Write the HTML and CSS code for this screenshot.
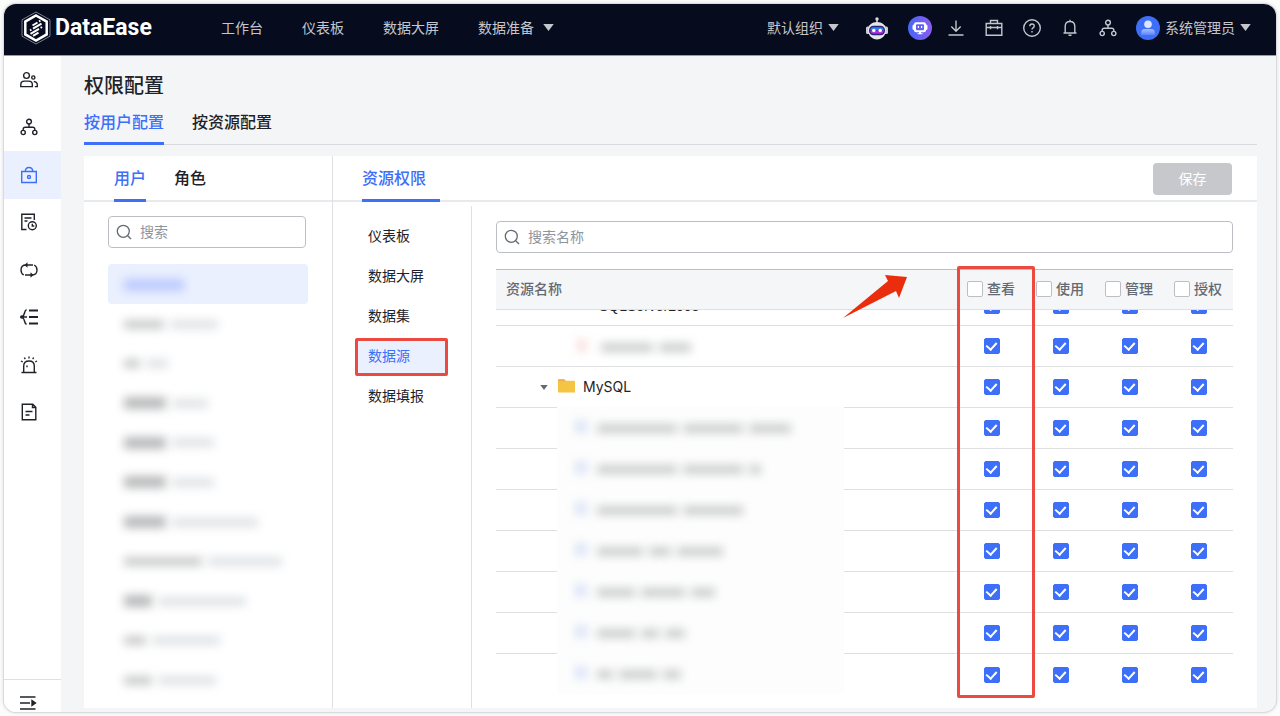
FILE: index.html
```html
<!DOCTYPE html>
<html lang="zh-CN">
<head>
<meta charset="utf-8">
<meta name="viewport" content="width=device-width, initial-scale=1">
<title>DataEase</title>
<link rel="stylesheet" href="styles.css">
</head>
<body>
<svg class="defs" aria-hidden="true">
  <symbol id="org" viewBox="0 0 18 18"><g fill="none" stroke="currentColor" stroke-width="1.4"><circle cx="9" cy="3.6" r="2.4"/><circle cx="3.2" cy="14.5" r="2.1"/><circle cx="14.8" cy="14.5" r="2.1"/><path d="M9 6v3.2M3.2 12.3v-1q0-2 2-2h7.600q2 0 2 2v1"/></g></symbol>
  <symbol id="search" viewBox="0 0 16 16"><g fill="none" stroke="currentColor" stroke-width="1.3"><circle cx="7.300" cy="7.300" r="6"/><path d="M11.700 11.700l3.300 3.300"/></g></symbol>
  <symbol id="caret" viewBox="0 0 12 8"><path d="M0 0h12L6 8z" fill="currentColor"/></symbol>
</svg>
<div class="window">
  <header class="topbar">
    <a class="brand" href="#">
      <svg class="brand-mark" viewBox="0 0 30 34" fill="none">
        <path d="M15 1L29 8.800V25.200L15 33L1 25.200V8.800z" stroke="#9a9eaa" stroke-width=".8"/>
        <path d="M15 4.500L25.700 10.600V23.400L15 29.500L4.300 23.400V10.600z" stroke="#fff" stroke-width="2.500"/>
        <path d="M11.500 14.500l5-3M18 10.500l1.400-.8M9 19.500l1.400-.8M12 17.600l8.500-5M9.500 22.800l8.500-5M19.600 16.800l1.400-.8M12 24.800l5.500-3.200" stroke="#fff" stroke-width="2"/>
      </svg>
      <span>DataEase</span>
    </a>
    <nav class="topnav">
      <a href="#">工作台</a><a href="#">仪表板</a><a href="#">数据大屏</a>
      <a href="#" class="has-caret wide">数据准备<svg class="caret"><use href="#caret"/></svg></a>
    </nav>
    <div class="tools">
      <button class="has-caret org-switch">默认组织<svg class="caret"><use href="#caret"/></svg></button>
      <button class="robot" aria-label="智能助手">
        <svg width="24" height="24" viewBox="0 0 24 24"><circle cx="12" cy="3" r="1.700" fill="#d9dbe2"/><path d="M11.300 4h1.400v3h-1.400z" fill="#d9dbe2"/><rect x="1" y="10.500" width="22" height="7.500" rx="1.500" fill="#c9ccd5"/><path d="M3 14C3 9 7 6 12 6s9 3 9 8-4 9.500-9 9.500S3 19 3 14z" fill="#e4e6ea"/><rect x="4" y="9.800" width="16" height="9.400" rx="4.500" fill="#2b2376"/><path d="M7 11.200h10q1.800 1 1.800 3H5.200q0-2 1.800-3z" fill="#2b82ee"/><path d="M5.200 14.500h13.600q-.3 3.300-3.300 3.300h-7q-3 0-3.300-3.300z" fill="#b12fd8"/><circle cx="8.800" cy="14.500" r="1.700" fill="#fff"/><circle cx="15.200" cy="14.500" r="1.700" fill="#fff"/></svg>
      </button>
      <button class="copilot" aria-label="Copilot">
        <svg width="24" height="24" viewBox="0 0 24 24"><defs><linearGradient id="cg"><stop stop-color="#4566f6"/><stop offset="1" stop-color="#8b5cf0"/></linearGradient></defs><circle cx="12" cy="12" r="12" fill="url(#cg)"/><rect x="4.500" y="8.500" width="15" height="5.500" rx="1.500" fill="#fff"/><rect x="6" y="6.200" width="12" height="10" rx="2" fill="#fff"/><path d="M11 16h2v1.200h1.500v1h-5v-1H11z" fill="#fff"/><rect x="8" y="8.200" width="8" height="6" rx="1" fill="#6461ee"/><path d="M10.400 10v2M13.600 10v2" stroke="#fff" stroke-width="1.200"/></svg>
      </button>
      <div class="line-tools">
        <button aria-label="下载"><svg viewBox="0 0 18 18"><path d="M9 1.500v10.500M4.300 7.500L9 12.200l4.700-4.700M1.500 16h15"/></svg></button>
        <button aria-label="工具箱"><svg viewBox="0 0 18 18"><path d="M1.200 4.500h15.600v11.800H1.200zM5.500 4.500v-3h7v3M1.200 8.500h15.600M5.500 7v3.200M12.500 7v3.200"/></svg></button>
        <button aria-label="帮助"><svg viewBox="0 0 18 18"><circle cx="9" cy="9" r="8.300"/><path d="M6.800 7.200q0-2.200 2.200-2.200t2.200 2q0 1.200-1.200 1.900-1 .6-1 1.700M9 12v1.500"/></svg></button>
        <button aria-label="消息"><svg viewBox="0 0 18 18"><path d="M9 .8v1.500M2.500 14h13M4.200 14V7.500q0-5 4.800-5t4.800 5V14M7.500 16.300h3"/></svg></button>
        <button aria-label="系统"><svg viewBox="0 0 18 18"><use href="#org"/></svg></button>
      </div>
      <button class="has-caret account">
        <svg width="24" height="24" viewBox="0 0 24 24"><defs><linearGradient id="ag" x2="0" y2="1"><stop stop-color="#a9c0ff"/><stop offset="1" stop-color="#5c85fb"/></linearGradient></defs><circle cx="12" cy="12" r="12" fill="#3d6ff8"/><circle cx="12" cy="8.200" r="3.800" fill="#dce5ff"/><path d="M5.200 19v-2.500q0-3.500 3.500-3.500h6.600q3.500 0 3.500 3.500V19z" fill="url(#ag)"/></svg>
        <span>系统管理员</span><svg class="caret"><use href="#caret"/></svg>
      </button>
    </div>
  </header>
  <div class="body">
    <aside class="sidebar">
      <nav class="side-nav">
        <a href="#" aria-label="用户"><svg viewBox="0 0 18 18"><circle cx="6.500" cy="4.500" r="2.900"/><path d="M.8 15.600v-2q0-3.500 3.500-3.500h4.500q3.500 0 3.500 3.500v2z"/><circle cx="13.300" cy="6.500" r="1.600"/><path d="M13.800 10.500q3.500.3 3.500 3.500v1.600h-2.500"/></svg></a>
        <a href="#" aria-label="组织"><svg viewBox="0 0 18 18"><use href="#org"/></svg></a>
        <a href="#" aria-label="权限配置" class="active"><svg viewBox="0 0 18 18"><path d="M1.700 5.500h14.600v11H1.700zM5.300 5.500q0-4 3.700-4t3.700 4"/><circle cx="9" cy="11" r="1.500"/></svg></a>
        <a href="#" aria-label="日志"><svg viewBox="0 0 18 18"><path d="M6.500 16.500H1.800V1.200h12.500V7M4.500 5h7M4.500 8h3"/><circle cx="12.300" cy="12.800" r="4"/><path d="M12.300 10.800v2.200h2"/></svg></a>
        <a href="#" aria-label="同步"><svg viewBox="0 0 18 18"><path d="M3.800 14Q1 12.500 1 9q0-5 5-5h7M5 14h7q5 0 5-5 0-3.500-2.800-5"/><path d="M7.500 1.200v5.600L4.500 4zM10.500 11.200v5.600l3-2.800z" fill="currentColor" stroke="none"/></svg></a>
        <a href="#" aria-label="血缘"><svg viewBox="0 0 18 18"><path d="M9 2.500h9M9 9h9M9 15.500h9" stroke-width="2"/><path d="M6.500 1.500Q5 2.500 4.500 5T2 9q2 1.500 2.500 4t2 3.500M2 9h5"/><circle cx="1.800" cy="9" r="1.800" fill="currentColor" stroke="none"/></svg></a>
        <a href="#" aria-label="告警"><svg viewBox="0 0 18 18"><path d="M1.500 16.500h15M3.700 16.500V10q0-5 5.300-5t5.300 5v6.500M9 .5v2M4.300 1.500l1 1.700M13.700 1.500l-1 1.700M1 5l1.700.9M17 5l-1.700.9M7 9.500v1.800"/></svg></a>
        <a href="#" aria-label="文档"><svg viewBox="0 0 18 18"><path d="M2.300 1.200h10.500l3 3v12.600H2.300zM12.500 1.200v3.300h3.300M5.500 8.500h7M5.500 12h4"/></svg></a>
      </nav>
      <button class="collapse" aria-label="展开菜单"><svg viewBox="0 0 18 18"><path d="M1 3h15.500M1 9h10M1 15h15.500" stroke-width="1.600"/><path d="M13 6.500l3.500 2.500-3.500 2.500z" fill="currentColor"/></svg></button>
    </aside>
    <main class="main">
      <h1>权限配置</h1>
      <nav class="page-tabs"><a href="#" class="active">按用户配置</a><a href="#">按资源配置</a></nav>
      <div class="panel">
        <section class="users">
          <nav class="tabs"><a href="#" class="active">用户</a><a href="#">角色</a></nav>
          <div class="users-body">
            <label class="search"><svg><use href="#search"/></svg><input type="text" placeholder="搜索" aria-label="搜索"></label>
            <ul class="user-list" aria-label="用户列表">
              <li class="selected"><i style="width:60px"></i></li>
              <li class="soft"><i style="width:40px"></i><i style="width:48px"></i></li>
              <li class="soft"><i style="width:16px"></i><i style="width:22px"></i></li>
              <li><i style="width:42px"></i><i style="width:36px"></i></li>
              <li><i style="width:42px"></i><i style="width:42px"></i></li>
              <li><i style="width:42px"></i><i style="width:42px"></i></li>
              <li><i style="width:42px"></i><i style="width:86px"></i></li>
              <li class="soft"><i style="width:78px"></i><i style="width:74px"></i></li>
              <li><i style="width:28px"></i><i style="width:88px"></i></li>
              <li class="soft"><i style="width:22px"></i><i style="width:68px"></i></li>
              <li class="soft"><i style="width:28px"></i><i style="width:58px"></i></li>
            </ul>
          </div>
        </section>
        <section class="resources">
          <div class="resource-head">
            <nav class="tabs"><a href="#" class="active">资源权限</a></nav>
            <button class="save" disabled>保存</button>
          </div>
          <div class="resource-body">
            <nav class="types">
              <a href="#">仪表板</a><a href="#">数据大屏</a><a href="#">数据集</a><a href="#" class="active">数据源</a><a href="#">数据填报</a>
            </nav>
            <div class="grants">
              <label class="search"><svg><use href="#search"/></svg><input type="text" placeholder="搜索名称" aria-label="搜索名称"></label>
              <div class="table-wrap">
                <table>
                  <thead><tr><th class="name">资源名称</th><th><label><input type="checkbox">查看</label></th><th><label><input type="checkbox">使用</label></th><th><label><input type="checkbox">管理</label></th><th><label><input type="checkbox">授权</label></th></tr></thead>
                  <tbody>
                    <tr class="clipped"><td class="name"><div>SQLServer2008</div></td><td><div><input type="checkbox" checked aria-label="查看"></div></td><td><div><input type="checkbox" checked aria-label="使用"></div></td><td><div><input type="checkbox" checked aria-label="管理"></div></td><td><div><input type="checkbox" checked aria-label="授权"></div></td></tr>
                    <tr><td class="name"><div class="hidden-name first"><i class="kind"></i><i class="bar" style="width:52px"></i><i class="bar" style="width:32px"></i></div></td><td><input type="checkbox" checked aria-label="查看"></td><td><input type="checkbox" checked aria-label="使用"></td><td><input type="checkbox" checked aria-label="管理"></td><td><input type="checkbox" checked aria-label="授权"></td></tr>
                    <tr><td class="name"><div class="folder"><svg class="fold"><use href="#caret"/></svg><svg class="folder-icon" viewBox="0 0 18 15"><path d="M0 2Q0 1 1 1h5.500L8 2.500h9q1 0 1 1V14q0 1-1 1H1q-1 0-1-1z" fill="#f5c443"/><path d="M0 3V2Q0 1 1 1h5.500L8 2.500V3z" fill="#eeb04f"/></svg><span>MySQL</span></div></td><td><input type="checkbox" checked aria-label="查看"></td><td><input type="checkbox" checked aria-label="使用"></td><td><input type="checkbox" checked aria-label="管理"></td><td><input type="checkbox" checked aria-label="授权"></td></tr>
                    <tr><td></td><td><input type="checkbox" checked aria-label="查看"></td><td><input type="checkbox" checked aria-label="使用"></td><td><input type="checkbox" checked aria-label="管理"></td><td><input type="checkbox" checked aria-label="授权"></td></tr>
                    <tr><td></td><td><input type="checkbox" checked aria-label="查看"></td><td><input type="checkbox" checked aria-label="使用"></td><td><input type="checkbox" checked aria-label="管理"></td><td><input type="checkbox" checked aria-label="授权"></td></tr>
                    <tr><td></td><td><input type="checkbox" checked aria-label="查看"></td><td><input type="checkbox" checked aria-label="使用"></td><td><input type="checkbox" checked aria-label="管理"></td><td><input type="checkbox" checked aria-label="授权"></td></tr>
                    <tr><td></td><td><input type="checkbox" checked aria-label="查看"></td><td><input type="checkbox" checked aria-label="使用"></td><td><input type="checkbox" checked aria-label="管理"></td><td><input type="checkbox" checked aria-label="授权"></td></tr>
                    <tr><td></td><td><input type="checkbox" checked aria-label="查看"></td><td><input type="checkbox" checked aria-label="使用"></td><td><input type="checkbox" checked aria-label="管理"></td><td><input type="checkbox" checked aria-label="授权"></td></tr>
                    <tr><td></td><td><input type="checkbox" checked aria-label="查看"></td><td><input type="checkbox" checked aria-label="使用"></td><td><input type="checkbox" checked aria-label="管理"></td><td><input type="checkbox" checked aria-label="授权"></td></tr>
                    <tr><td></td><td><input type="checkbox" checked aria-label="查看"></td><td><input type="checkbox" checked aria-label="使用"></td><td><input type="checkbox" checked aria-label="管理"></td><td><input type="checkbox" checked aria-label="授权"></td></tr>
                  </tbody>
                </table>
                <div class="redaction" aria-hidden="true">
                  <div class="hidden-name"><i class="kind"></i><i class="bar" style="width:80px"></i><i class="bar" style="width:60px"></i><i class="bar" style="width:42px"></i></div>
                  <div class="hidden-name"><i class="kind"></i><i class="bar" style="width:80px"></i><i class="bar" style="width:60px"></i><i class="bar" style="width:12px"></i></div>
                  <div class="hidden-name"><i class="kind"></i><i class="bar" style="width:80px"></i><i class="bar" style="width:60px"></i></div>
                  <div class="hidden-name"><i class="kind"></i><i class="bar" style="width:46px"></i><i class="bar" style="width:22px"></i><i class="bar" style="width:46px"></i></div>
                  <div class="hidden-name"><i class="kind"></i><i class="bar" style="width:38px"></i><i class="bar" style="width:44px"></i><i class="bar" style="width:24px"></i></div>
                  <div class="hidden-name"><i class="kind"></i><i class="bar" style="width:38px"></i><i class="bar" style="width:18px"></i><i class="bar" style="width:20px"></i></div>
                  <div class="hidden-name"><i class="kind"></i><i class="bar" style="width:16px"></i><i class="bar" style="width:38px"></i><i class="bar" style="width:18px"></i></div>
                </div>
                <div class="mark-column"></div>
                <svg class="mark-arrow" viewBox="0 0 64 43"><path d="M0 43L45 6 42 0 64 2 56 23 53 16z" fill="#ea2d0c"/></svg>
              </div>
            </div>
          </div>
        </section>
      </div>
    </main>
  </div>
</div>
</body>
</html>
```

FILE: styles.css
```css
* { box-sizing: border-box; }
body {
  margin: 0;
  padding: 4px;
  background: #fcfcfc;
  color: #1f2329;
  font: 14px/20px "Liberation Sans", "Noto Sans CJK SC", sans-serif;
}
a { color: inherit; text-decoration: none; }
button { border: 0; padding: 0; background: none; color: inherit; font: inherit; }
ul { margin: 0; padding: 0; list-style: none; }
svg { display: block; flex: none; }
.defs { position: absolute; width: 0; height: 0; }

.window {
  display: flex;
  flex-direction: column;
  min-height: calc(100vh - 8px);
  border-radius: 12px;
  overflow: hidden;
  background: #f4f5f7;
  box-shadow: 0 0 0 1px #d9dadc, 0 0 4px #0003;
}

/* Top bar */
.topbar {
  display: flex;
  align-items: center;
  height: 52px;
  padding: 0 25px 4px 17px;
  background: #060b1e;
  border-bottom: 1px solid #999ba3;
  color: #c4c6cc;
}
.brand { display: flex; align-items: center; gap: 4px; width: 200px; color: #fff; font: 700 23px/28px Roboto, sans-serif; }
.brand-mark { width: 30px; height: 34px; }
.topnav { display: flex; gap: 39px; }
.has-caret { display: flex; align-items: center; gap: 5px; }
.wide { gap: 9px; }
.caret { width: 11px; height: 7px; }
.tools { display: flex; align-items: center; margin-left: auto; }
.robot { margin-left: 26px; }
.copilot { margin-left: 19px; }
.line-tools { display: flex; gap: 20px; margin: 0 19px 0 15px; }
.line-tools svg { width: 18px; height: 18px; fill: none; stroke: currentColor; stroke-width: 1.4; }

.body { display: flex; flex: 1; }

/* Sidebar */
.sidebar { display: flex; flex-direction: column; width: 57px; background: #fff; }
.side-nav { display: grid; grid-auto-rows: 1fr; height: 380px; }
.side-nav a { display: grid; place-items: center; padding-right: 8px; }
.side-nav .active { background: #ebf0ff; color: #3d6ff8; }
.sidebar svg { width: 18px; height: 18px; fill: none; stroke: currentColor; stroke-width: 1.4; }
.collapse { height: 33px; margin-top: auto; padding: 13px 15px 0; border-top: 1px solid #dee0e3; }

/* Page */
.main { display: flex; flex: 1; flex-direction: column; min-width: 0; padding: 16px 19px 4px 23px; }
h1 { margin: 0; font-size: 20px; font-weight: 500; line-height: 28px; }
.page-tabs { display: flex; gap: 28px; margin-bottom: 11px; border-bottom: 1px solid #d9dbde; font-size: 16px; font-weight: 500; line-height: 24px; }
.page-tabs a { height: 45px; padding-top: 11px; margin-bottom: -1px; }
.active { color: #3d6ff8; }
.page-tabs .active, .tabs .active { border-bottom: 3px solid #3d6ff8; }
.panel { display: flex; flex: 1; background: #fff; }
.tabs { display: flex; gap: 28px; font-size: 16px; font-weight: 500; line-height: 24px; }
.tabs a { height: 46px; padding-top: 11px; margin-bottom: -2px; }

.users { width: 249px; border-right: 1px solid #dee0e3; }
.users .tabs { padding-left: 30px; border-bottom: 2px solid #e8e9eb; }
.users-body { padding: 14px 24px 0; }
.users .search { margin-right: 2px; }
.search { position: relative; display: block; color: #646a73; }
.search svg { position: absolute; left: 8px; top: 8px; width: 16px; height: 16px; }
.search input {
  display: block;
  width: 100%;
  height: 32px;
  padding: 0 12px 0 31px;
  border: 1px solid #bbbfc4;
  border-radius: 4px;
  background: none;
  font: inherit;
}
.search input::placeholder { color: #8f959e; opacity: 1; }
.user-list { display: grid; grid-auto-rows: 1fr; height: 435px; margin-top: 16px; }
.user-list li { display: flex; align-items: center; gap: 6px; padding: 2px 16px 0; }
.user-list .selected { border-radius: 4px; background: #eaf0fe; }
.user-list i { height: 12px; background: #b9babb; filter: blur(5px); }
.user-list i + i { height: 9px; background: #dfe2e5; }
.user-list .soft i:first-child { height: 9px; background: #c9cacb; }
.user-list .selected i { background: #bccafe; }

.resources { display: flex; flex: 1; flex-direction: column; min-width: 0; }
.resource-head { display: flex; justify-content: space-between; padding: 0 25px 0 29px; border-bottom: 2px solid #e8e9eb; }
.resource-head .tabs a { width: 78px; }
.save { width: 79px; height: 32px; margin-top: 7px; border-radius: 4px; background: #c7c8cc; color: #fff; }
.resource-body { display: flex; flex: 1; padding-top: 4px; }
.types { display: flex; flex-direction: column; gap: 8px; width: 139px; padding: 15px 26px 0 25px; border-right: 1px solid #dee0e3; }
.types a { height: 32px; padding: 5px 10px; }
.types .active { position: relative; background: #ebf0ff; }
.types .active::after { content: ""; position: absolute; inset: -3px; border: 3px solid #ea4a3f; border-radius: 2px; }
.grants { flex: 1; min-width: 0; padding: 15px 24px 0; }

/* Permission table */
.table-wrap { position: relative; margin-top: 16px; }
table { width: 100%; border-collapse: separate; border-spacing: 0; table-layout: fixed; }
th { width: 69px; height: 41px; padding: 0 0 2px; background: #f5f6f7; border-top: 1px solid #bbbfc4; border-bottom: 1px solid #dee0e3; color: #646a73; font-weight: 500; text-align: left; }
th.name { width: auto; padding-left: 10px; }
th label { display: flex; align-items: center; gap: 4px; padding-left: 10px; }
td { height: 41px; padding: 0; border-bottom: 1px solid #dee0e3; }
tbody tr:last-child td { border-bottom: 0; }
input[type="checkbox"] { appearance: none; display: grid; place-items: center; width: 16px; height: 16px; border: 1px solid #bbbfc4; border-radius: 2px; background: #fff; }
th input { margin: 0; }
td input { margin: 0 auto; }
input[type="checkbox"]:checked { border-color: #3d6ff8; background: #3d6ff8; }
input[type="checkbox"]:checked::after { content: ""; width: 5px; height: 8px; margin-top: -2px; border: solid #fff; border-width: 0 2px 2px 0; transform: rotate(42deg); }
.clipped td { height: 16px; }
.clipped div { display: flex; align-items: flex-end; height: 15px; overflow: hidden; }
.clipped .name div { padding: 0 0 9px 103px; }
.clipped td:not(.name) div { height: 4px; margin-bottom: 11px; }
.folder { display: flex; align-items: center; padding-left: 44px; font: 14px/20px Inter, sans-serif; }
.fold { width: 8px; height: 5px; color: #646a73; }
.folder-icon { width: 17px; height: 15px; margin: 0 8px 3px 10px; }

/* Masked names */
.hidden-name { display: flex; align-items: center; gap: 6px; height: 41px; padding: 2px 0 0 18px; }
.hidden-name.first { height: 40px; padding-left: 81px; }
.kind { width: 12px; height: 13px; margin: 0 4px 4px 0; background: #dbe4f6; filter: blur(5px); }
.first .kind { width: 10px; margin-right: 8px; background: #fbdfdf; }
.bar { height: 9px; background: #cbcdcd; filter: blur(5px); }
.redaction { position: absolute; left: 61px; top: 138px; width: 287px; background: #fdfdfd; }

/* Annotations */
.mark-column { position: absolute; top: -3px; right: 198px; width: 78px; height: 432px; border: 3px solid #ea4a3f; border-radius: 2px; }
.mark-arrow { position: absolute; top: 6px; right: 326px; width: 64px; height: 43px; }
```
